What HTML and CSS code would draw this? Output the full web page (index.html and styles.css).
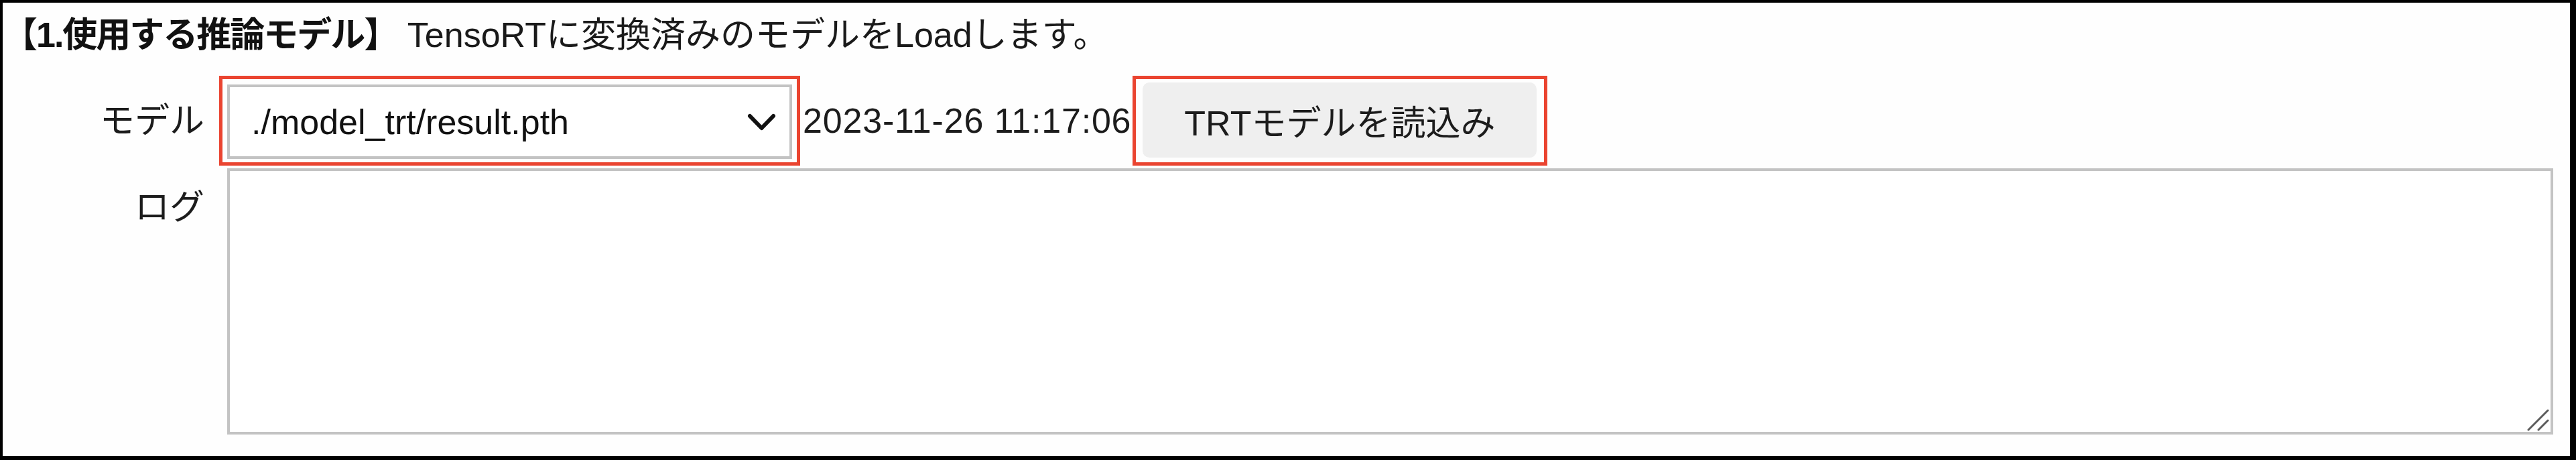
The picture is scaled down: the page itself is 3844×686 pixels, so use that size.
FILE: index.html
```html
<!DOCTYPE html>
<html lang="ja">
<head>
<meta charset="utf-8">
<title>1.使用する推論モデル</title>
<link rel="stylesheet" href="styles.css">
</head>
<body>
<div class="panel">
  <div class="title"><span class="title-strong">【1.使用する推論モデル】</span> TensoRTに変換済みのモデルをLoadします。</div>
  <div class="row row-model">
    <div class="label">モデル</div>
    <div class="controls">
      <div class="mark mark-select">
        <div class="select">
          <span class="select-value">./model_trt/result.pth</span>
          <svg class="chevron" width="43" height="28" viewBox="0 0 43 28"><polyline points="4,5 21.5,23 39,5" fill="none" stroke="#111" stroke-width="6" stroke-linecap="round" stroke-linejoin="round"/></svg>
        </div>
      </div>
      <div class="stamp">2023-11-26 11:17:06</div>
      <div class="mark mark-button">
        <button class="btn" type="button">TRTモデルを読込み</button>
      </div>
    </div>
  </div>
  <div class="row row-log">
    <div class="label label-top">ログ</div>
    <div class="log-box">
      <textarea class="log"></textarea>
      <svg class="grip" width="34" height="34" viewBox="0 0 34 34"><line x1="32" y1="3" x2="3" y2="32" stroke="#5c5c5c" stroke-width="3" stroke-linecap="round"/><line x1="32" y1="18" x2="18" y2="32" stroke="#5c5c5c" stroke-width="3" stroke-linecap="round"/></svg>
    </div>
  </div>
</div>
</body>
</html>
```
FILE: styles.css
```css
html, body {
  margin: 0;
  height: 100%;
}
body {
  box-sizing: border-box;
  background: #000;
  padding: 4px 9px 6px 4px;
  font-family: "Liberation Sans", "Noto Sans CJK JP", sans-serif;
  font-size: 52px;
  color: #1c1c1c;
}
.panel {
  box-sizing: border-box;
  height: 100%;
  background: #fefefe;
  padding: 17px 25px 32px 0;
  display: flex;
  flex-direction: column;
}
.title {
  line-height: 62px;
  white-space: nowrap;
  color: #1a1a1a;
}
.title-strong {
  font-weight: 700;
  color: #111;
  letter-spacing: -2px;
}
.row {
  display: grid;
  grid-template-columns: 301px 1fr;
  column-gap: 22px;
}
.row-model {
  margin-top: 30px;
  align-items: center;
}
.row-log {
  margin-top: 4px;
  align-items: start;
}
.label {
  text-align: right;
  line-height: 62px;
  white-space: nowrap;
}
.label-top {
  padding-top: 27px;
}
.controls {
  display: flex;
  align-items: center;
}
.mark {
  box-sizing: border-box;
  border: 5px solid #ea4430;
  height: 134px;
}
.mark-select {
  padding: 8px 7px 5px 7px;
}
.mark-button {
  padding: 5px 11px 7px 10px;
}
.select {
  box-sizing: border-box;
  width: 843px;
  height: 111px;
  border: 4px solid #c3c3c3;
  background: #fff;
  display: flex;
  align-items: center;
  justify-content: space-between;
  padding: 0 20px 0 32px;
  color: #111;
}
.select-value {
  white-space: nowrap;
}
.chevron {
  display: block;
}
.stamp {
  padding: 0 2px 0 4px;
  white-space: nowrap;
  letter-spacing: 0.8px;
  color: #1c1c1c;
}
.btn {
  box-sizing: border-box;
  width: 588px;
  height: 112px;
  border: none;
  border-radius: 10px;
  background: #efefef;
  font: inherit;
  color: #1c1c1c;
  padding: 0;
}
.log-box {
  position: relative;
  margin-left: 12px;
  height: 397px;
}
.log {
  box-sizing: border-box;
  display: block;
  width: 100%;
  height: 100%;
  border: 4px solid #c3c3c3;
  background: #fff;
  resize: none;
  margin: 0;
  padding: 0;
  font: inherit;
}
.grip {
  position: absolute;
  right: 6px;
  bottom: 5px;
}
```
